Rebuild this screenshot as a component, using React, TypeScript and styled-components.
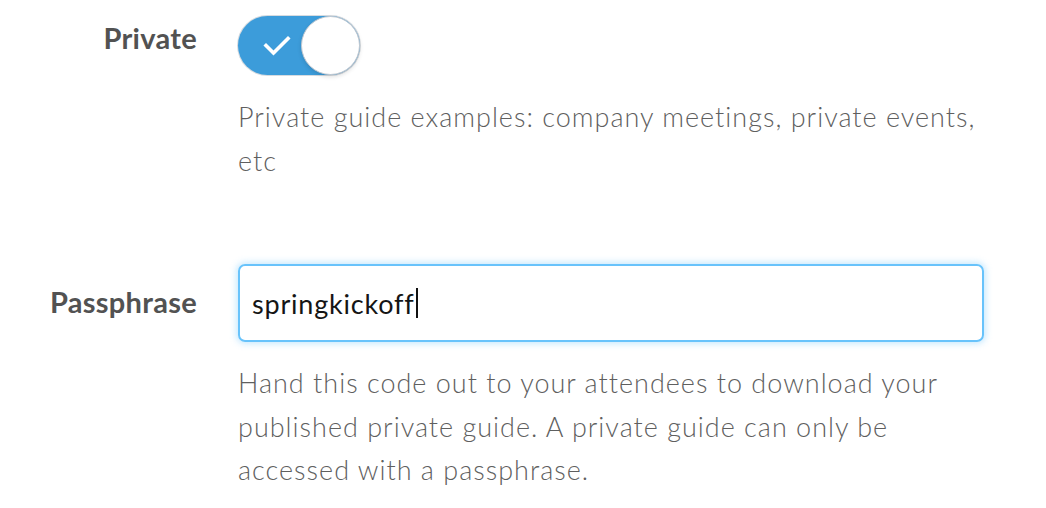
import styled, { createGlobalStyle } from "styled-components";

const GlobalStyle = createGlobalStyle`
  html, body {
    margin: 0;
    background: #ffffff;
    font-family: Lato, "Open Sans", "Liberation Sans", sans-serif;
  }
`;

const Form = styled.div`
  display: grid;
  grid-template-columns: 197px 746px;
  column-gap: 41px;
  padding-top: 16px;
`;

const Label = styled.div<{ $top: number }>`
  text-align: right;
  font-size: 29px;
  font-weight: 700;
  color: #525252;
  line-height: 30px;
  letter-spacing: 0.3px;
  padding-top: ${(p) => p.$top}px;
`;

const Field = styled.div<{ $gap: number }>`
  display: flex;
  flex-direction: column;
  padding-bottom: ${(p) => p.$gap}px;
`;

const Help = styled.p<{ $top: number }>`
  margin: ${(p) => p.$top}px 0 0;
  font-size: 27px;
  font-weight: 300;
  line-height: 43.5px;
  color: #5f5f5f;
  letter-spacing: 1px;
`;

const Track = styled.div`
  position: relative;
  width: 122px;
  height: 59px;
  border-radius: 30px;
  background: #3c9cda;
  box-shadow: 0 0 0 1px #d6dbe0;
`;

const Check = styled.svg`
  position: absolute;
  left: 25px;
  top: 17px;
`;

const Knob = styled.div`
  position: absolute;
  right: 0;
  top: 0;
  width: 57px;
  height: 57px;
  border-radius: 50%;
  background: #ffffff;
  border: 1px solid #c4c9d0;
  box-shadow: 0 2px 4px rgba(0, 0, 0, 0.12);
`;

const TextBox = styled.div`
  box-sizing: border-box;
  height: 78px;
  border: 2px solid #68c3fb;
  border-radius: 7px;
  box-shadow: 0 0 6px 2px rgba(104, 195, 251, 0.35);
  padding: 0 12px;
  display: flex;
  align-items: center;
  font-size: 27px;
  font-weight: 400;
  letter-spacing: 0.8px;
  color: #151515;
`;

const Caret = styled.span`
  display: inline-block;
  width: 2px;
  height: 30px;
  background: #111;
  margin-left: 1px;
`;

export default function App() {
  return (
    <>
      <GlobalStyle />
      <Form>
        <Label $top={7}>Private</Label>
        <Field $gap={82}>
          <Track>
            <Check width="30" height="24" viewBox="0 0 30 24">
              <path
                d="M3 12.5 L10.5 20 L25 5.5"
                fill="none"
                stroke="#ffffff"
                strokeWidth="3.6"
                strokeLinecap="square"
              />
            </Check>
            <Knob />
          </Track>
          <Help $top={20}>
            Private guide examples: company meetings, private events, etc
          </Help>
        </Field>

        <Label $top={23}>Passphrase</Label>
        <Field $gap={0}>
          <TextBox>
            springkickoff
            <Caret />
          </TextBox>
          <Help $top={19}>
            Hand this code out to your attendees to download your published
            private guide. A private guide can only be accessed with a
            passphrase.
          </Help>
        </Field>
      </Form>
    </>
  );
}
